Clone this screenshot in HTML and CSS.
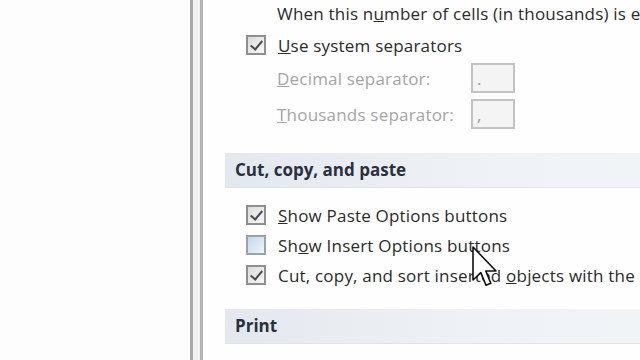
FILE: index.html
```html
<!DOCTYPE html>
<html lang="en">
<head>
  <meta charset="UTF-8">
  <title>Excel Options - Advanced</title>
  <link rel="stylesheet" href="styles.css">
</head>
<body>
  <div class="window">
    <div class="nav"></div>
    <div class="splitter"></div>
    <div class="content">
      <div class="row indent-text top-row">When this n<u>u</u>mber of cells (in thousands) is exceeded:</div>
      <label class="row check-row first-check">
        <span class="box checked"></span>
        <span><u>U</u>se system separators</span>
      </label>
      <div class="row field-row">
        <span class="field-label"><u>D</u>ecimal separator:</span>
        <span class="field">.</span>
      </div>
      <div class="row field-row">
        <span class="field-label"><u>T</u>housands separator:</span>
        <span class="field">,</span>
      </div>

      <div class="section">Cut, copy, and paste</div>
      <label class="row check-row">
        <span class="box checked"></span>
        <span><u>S</u>how Paste Options buttons</span>
      </label>
      <label class="row check-row">
        <span class="box empty"></span>
        <span>Sh<u>o</u>w Insert Options buttons</span>
      </label>
      <label class="row check-row">
        <span class="box checked"></span>
        <span>Cut, copy, and sort inserted <u>o</u>bjects with the</span>
      </label>

      <div class="section print">Print</div>
    </div>
  </div>

  <svg class="cursor" width="26" height="44" viewBox="0 0 13 22">
    <path d="M0.5 0.5 L0.5 17 L4.4 13.3 L7 19.6 L9.4 18.6 L6.9 12.5 L12 12.5 Z" fill="#fff" stroke="#111" stroke-width="0.8" stroke-linejoin="round"/>
  </svg>
</body>
</html>
```

FILE: styles.css
```css
* {
  margin: 0;
  padding: 0;
  box-sizing: border-box;
}
body {
  width: 640px;
  height: 360px;
  overflow: hidden;
  background: #fff;
  font-family: "Open Sans", "Noto Sans", sans-serif;
  font-size: 17px;
  letter-spacing: 0.2px;
  color: #2b2b2b;
}
.window {
  display: flex;
  height: 360px;
}
.nav {
  width: 190px;
  background: #fdfdfd;
}
.splitter {
  width: 13px;
  background: #f1f1f1;
  border-left: 3px solid #a9a9a9;
  border-right: 3px solid #b4b4b4;
}
.content {
  flex: 1;
  overflow: hidden;
  white-space: nowrap;
  padding-left: 22px;
  background: #fefefe;
}
.row {
  display: flex;
  align-items: center;
  padding-left: 21px;
  height: 30px;
}
.top-row {
  padding-left: 52px;
  height: 26px;
}
.check-row {
  gap: 12px;
}
.first-check {
  margin-top: 4px;
}
.box {
  width: 20px;
  height: 20px;
  border: 2px solid #8f8f8f;
  background: linear-gradient(135deg, #dcdcdc, #f7f7f7);
  position: relative;
  flex: none;
}
.box.checked::after {
  content: "";
  position: absolute;
  left: 5px;
  top: 1px;
  width: 5px;
  height: 10px;
  border: solid #4a4a55;
  border-width: 0 2px 2px 0;
  transform: rotate(40deg);
}
.box.empty {
  background: linear-gradient(135deg, #c4d9ea, #eef4f9);
  border-color: #9aa3ab;
}
.field-row {
  padding-left: 52px;
  height: 36px;
  color: #a5a5a5;
}
.field-label {
  width: 194px;
}
.field {
  width: 44px;
  height: 30px;
  border: 2px solid #c3c3c3;
  background: #f4f4f4;
  color: #9a9a9a;
  padding-left: 4px;
  line-height: 28px;
}
.section {
  margin-top: 21px;
  height: 35px;
  line-height: 33px;
  padding-left: 10px;
  font-weight: 700;
  letter-spacing: 0;
  color: #2a3040;
  background: linear-gradient(to right, #e3e8ee, #eef2f6 60%, #f1f4f7);
  border-bottom: 1px solid #dfe4ea;
  margin-bottom: 12px;
}
.print {
  margin-top: 19px;
}
.cursor {
  position: absolute;
  left: 472px;
  top: 246px;
}
```
